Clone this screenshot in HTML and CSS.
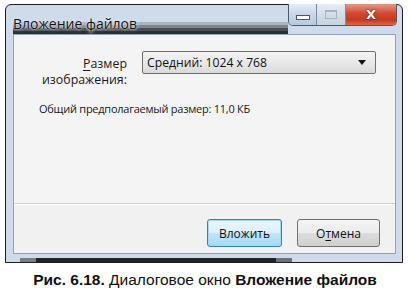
FILE: index.html
```html
<!DOCTYPE html>
<html lang="ru">
<head>
<meta charset="utf-8">
<link rel="stylesheet" href="styles.css">
</head>
<body>
<div class="window">
  <div class="titlebar">
    <div class="title">Вложение файлов</div>
    <div class="caption-buttons">
      <div class="cb cb-min"><span class="min-glyph"></span></div>
      <div class="cb cb-max"><span class="max-glyph"></span></div>
      <div class="cb cb-close">X</div>
    </div>
  </div>
  <div class="client">
    <div class="content">
      <div class="row">
        <div class="label"><u>Р</u>азмер<br>изображения:</div>
        <div class="combo"><span>Средний: 1024 x 768</span><span class="arrow"></span></div>
      </div>
      <div class="total">Общий предполагаемый размер: 11,0 КБ</div>
    </div>
    <div class="footer">
      <button class="btn btn-default">Вложить</button>
      <button class="btn btn-cancel">О<u>т</u>мена</button>
    </div>
  </div>
  <div class="bottom-frame"><div class="bottom-band">&nbsp;</div></div>
</div>
<p class="caption"><b>Рис. 6.18.</b> Диалоговое окно <b>Вложение файлов</b></p>
</body>
</html>
```

FILE: styles.css
```css
html, body {
  margin: 0;
  padding: 0;
  background: #ffffff;
}
body {
  width: 410px;
  height: 298px;
  overflow: hidden;
  font-family: "Open Sans", "Noto Sans", sans-serif;
}
.window {
  margin: 4px 0 0 5px;
  width: 398px;
  height: 259px;
  box-sizing: border-box;
  border: 1px solid #1c1c1c;
  border-radius: 6px 6px 0 0;
  padding: 0 6px 0 7px;
  display: flex;
  flex-direction: column;
  background-color: #cfdbea;
}
.titlebar {
  height: 29px;
  flex: none;
  display: flex;
  justify-content: space-between;
  align-items: flex-start;
  background-color: #cfdbea;
}
.title {
  flex: none;
  width: 275px;
  box-sizing: border-box;
  white-space: nowrap;
  font-size: 14px;
  color: #111;
  padding: 10px 0 2px 0;
  line-height: 17px;
  border-radius: 0 10px 0 0;
  box-shadow: inset 0 -3px 0 #2c2d2f, inset 0 -6px 0 #4b4e52, inset 0 -9px 0 #80868e, inset 0 -12px 0 #aab4c0;
  text-shadow: 0 0 4px #dfe8f2, 0 0 2px #dfe8f2, 0 0 1px #dfe8f2;
}
.caption-buttons {
  display: flex;
  margin-right: -1px;
  margin-top: -1px;
  height: 21px;
  border: 1px solid #4d5a6c;
  border-top: none;
  border-radius: 0 0 5px 5px;
  overflow: hidden;
}
.cb {
  height: 21px;
  display: flex;
  align-items: center;
  justify-content: center;
  box-sizing: border-box;
}
.cb-min {
  width: 29px;
  background: linear-gradient(#e4ecf5, #c9d6e6 50%, #b9c9dd);
  border-right: 1px solid #7c8ba0;
}
.cb-max {
  width: 29px;
  background: linear-gradient(#e8eef5, #d3dde9 50%, #c8d4e3);
  border-right: 1px solid #7c8ba0;
}
.cb-close {
  width: 51px;
  background: linear-gradient(#e89a88, #d4482f 45%, #c33a22 75%, #d9684c);
  color: #fff;
  font-family: "DejaVu Sans", sans-serif;
  font-weight: bold;
  font-size: 13px;
  text-shadow: 0 0 2px #6a160a, 0 0 1px #6a160a;
}
.min-glyph {
  display: block;
  width: 12px;
  height: 3px;
  background: #fff;
  border: 1px solid #4a5566;
  margin-top: 5px;
}
.max-glyph {
  display: block;
  width: 10px;
  height: 6px;
  border: 1px solid #a8b3c2;
  border-top-width: 2px;
}
.client {
  flex: 1;
  border: 1px solid #8ea3bd;
  background: #f1f1f1;
  display: flex;
  flex-direction: column;
}
.bottom-frame {
  height: 8px;
  flex: none;
  display: flex;
  align-items: flex-end;
  margin: 0 -6px 0 -7px;
  background-color: #cfdbea;
}
.bottom-band {
  margin-left: 14px;
  width: 240px;
  height: 4px;
  font-size: 1px;
  line-height: 1px;
  overflow: hidden;
  background-color: #232323;
  border-left: 16px solid #7a7f86;
  border-right: 16px solid #6d7278;
}
.content {
  height: 169px;
  background: #f4f4f4;
  border-bottom: 1px solid #cfcfcf;
  box-shadow: 0 1px 0 #ffffff;
  padding: 16px 0 0 0;
  box-sizing: border-box;
  color: #1a1a1a;
}
.row {
  display: flex;
  align-items: flex-start;
}
.label {
  width: 113px;
  text-align: right;
  line-height: 16px;
  padding-top: 5px;
  font-size: 12.4px;
}
.label u {
  text-decoration-thickness: 1px;
  text-underline-offset: 2px;
}
.combo {
  margin-left: 15px;
  width: 234px;
  height: 23px;
  box-sizing: border-box;
  border: 1px solid #707070;
  border-radius: 2px;
  background: linear-gradient(#f3f3f3, #e9e9e9 50%, #dadada);
  display: flex;
  align-items: center;
  justify-content: space-between;
  padding: 0 9px 0 4px;
  font-size: 12.2px;
  color: #111;
}
.arrow {
  width: 0;
  height: 0;
  border-left: 4px solid transparent;
  border-right: 4px solid transparent;
  border-top: 5px solid #111;
}
.total {
  margin: 13px 0 0 25px;
  font-size: 11px;
  letter-spacing: -0.25px;
}
.footer {
  flex: 1;
  display: flex;
  justify-content: flex-end;
  align-items: flex-start;
  gap: 15px;
  padding: 15px 15px 0 0;
}
.btn {
  height: 28px;
  box-sizing: border-box;
  border: 1px solid #707070;
  border-radius: 3px;
  background: linear-gradient(#f4f4f4, #ebebeb 50%, #dddddd 51%, #cfcfcf);
  font-family: "Open Sans", "Noto Sans", sans-serif;
  font-size: 12px;
  color: #111;
  padding: 0;
}
.btn-default {
  width: 75px;
  border-color: #3c7fb1;
  background: linear-gradient(#eaf6fd, #d9f0fc 50%, #bee6fd 51%, #a7d9f5);
  box-shadow: inset 0 0 0 1px #a9d6f0;
}
.btn-cancel {
  width: 83px;
}
.btn u {
  text-underline-offset: 2px;
}
.caption {
  margin: 8px 0 0 0;
  text-align: center;
  font-family: "Liberation Sans", Arial, sans-serif;
  font-size: 15.5px;
  color: #111;
}
```
